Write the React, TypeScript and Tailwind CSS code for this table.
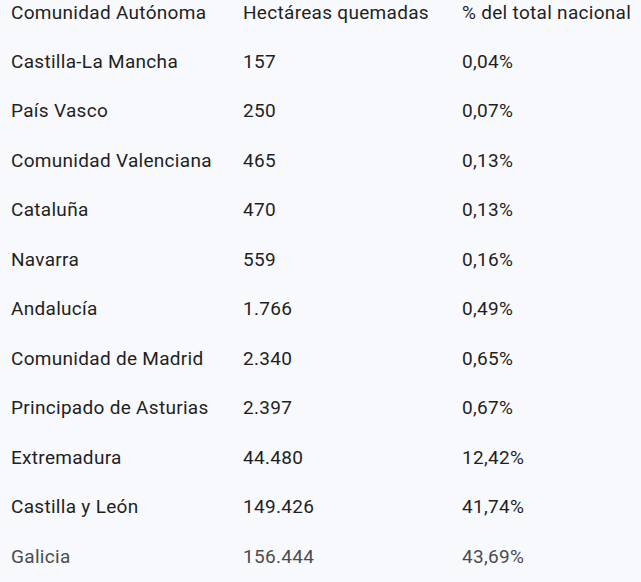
import React from "react";

const rows: [string, string, string][] = [
  ["Castilla-La Mancha", "157", "0,04%"],
  ["País Vasco", "250", "0,07%"],
  ["Comunidad Valenciana", "465", "0,13%"],
  ["Cataluña", "470", "0,13%"],
  ["Navarra", "559", "0,16%"],
  ["Andalucía", "1.766", "0,49%"],
  ["Comunidad de Madrid", "2.340", "0,65%"],
  ["Principado de Asturias", "2.397", "0,67%"],
  ["Extremadura", "44.480", "12,42%"],
  ["Castilla y León", "149.426", "41,74%"],
  ["Galicia", "156.444", "43,69%"],
];

export default function App() {
  return (
    <div
      className="w-[641px] h-[582px] overflow-hidden bg-[#f8f9fc] text-[#1f1f1f] text-[19px] tracking-[0.3px]"
      style={{ fontFamily: "Roboto, 'Noto Sans', sans-serif" }}
    >
      <div className="flex h-[37px] items-start leading-[25px] pl-[11px]">
        <div className="w-[232px] shrink-0">Comunidad Autónoma</div>
        <div className="w-[219px] shrink-0">Hectáreas quemadas</div>
        <div className="whitespace-nowrap">% del total nacional</div>
      </div>
      {rows.map((r, i) => (
        <div
          key={r[0]}
          className={`flex h-[49.5px] items-center pl-[11px] ${i === rows.length - 1 ? "text-[#4a4d50]" : ""}`}
        >
          <div className="w-[232px] shrink-0">{r[0]}</div>
          <div className="w-[219px] shrink-0">{r[1]}</div>
          <div>{r[2]}</div>
        </div>
      ))}
    </div>
  );
}
